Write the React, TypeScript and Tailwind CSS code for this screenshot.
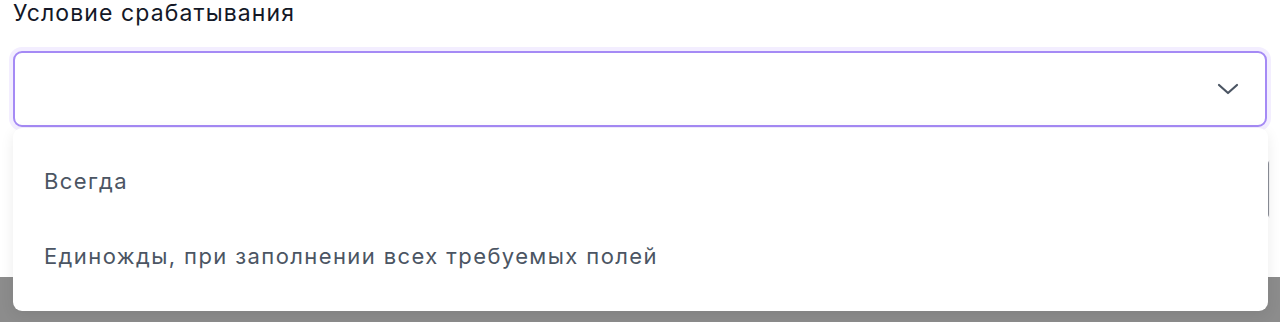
import React from "react";

export default function App() {
  return (
    <div
      className="relative w-[1280px] h-[322px] overflow-hidden bg-white"
      style={{ fontFamily: "Inter, 'Noto Sans', sans-serif" }}
    >
      <div className="flex flex-col px-[13px]">
        <label className="text-[23px] leading-[27px] text-[#141827] tracking-[1.1px]">
          Условие срабатывания
        </label>
        <div className="mt-[24px] flex h-[76px] items-center justify-end rounded-[9px] border-2 border-[#a58af5] bg-white pr-[26px] shadow-[0_0_0_4px_#f3eeff]">
          <svg width="22" height="12" viewBox="0 0 22 12" fill="none">
            <path d="M2 2l9 8 9-8" stroke="#4b5563" strokeWidth="2.2" strokeLinecap="round" strokeLinejoin="round" />
          </svg>
        </div>
      </div>
      <div className="mt-[33px] flex h-[58px] pl-[13px] pr-[10px]">
        <div className="flex-1 rounded-r-[4px] border-r-2 border-[#8b8e98]" />
        <div className="w-[1px] bg-[#f4f4f5]" />
      </div>
      <div className="mt-[59px] h-[60px] bg-[#8c8c8c]" />

      <div className="absolute left-[13px] top-[128px] flex h-[183px] w-[1255px] flex-col rounded-[9px] bg-white py-[16px] shadow-[0_4px_14px_rgba(0,0,0,0.08)]">
        <div className="flex h-[75px] items-center pl-[31px] text-[22px] text-[#4b5563] tracking-[1.4px]">
          Всегда
        </div>
        <div className="flex h-[75px] items-center pl-[31px] text-[22px] text-[#4b5563] tracking-[1.4px]">
          Единожды, при заполнении всех требуемых полей
        </div>
      </div>
    </div>
  );
}
